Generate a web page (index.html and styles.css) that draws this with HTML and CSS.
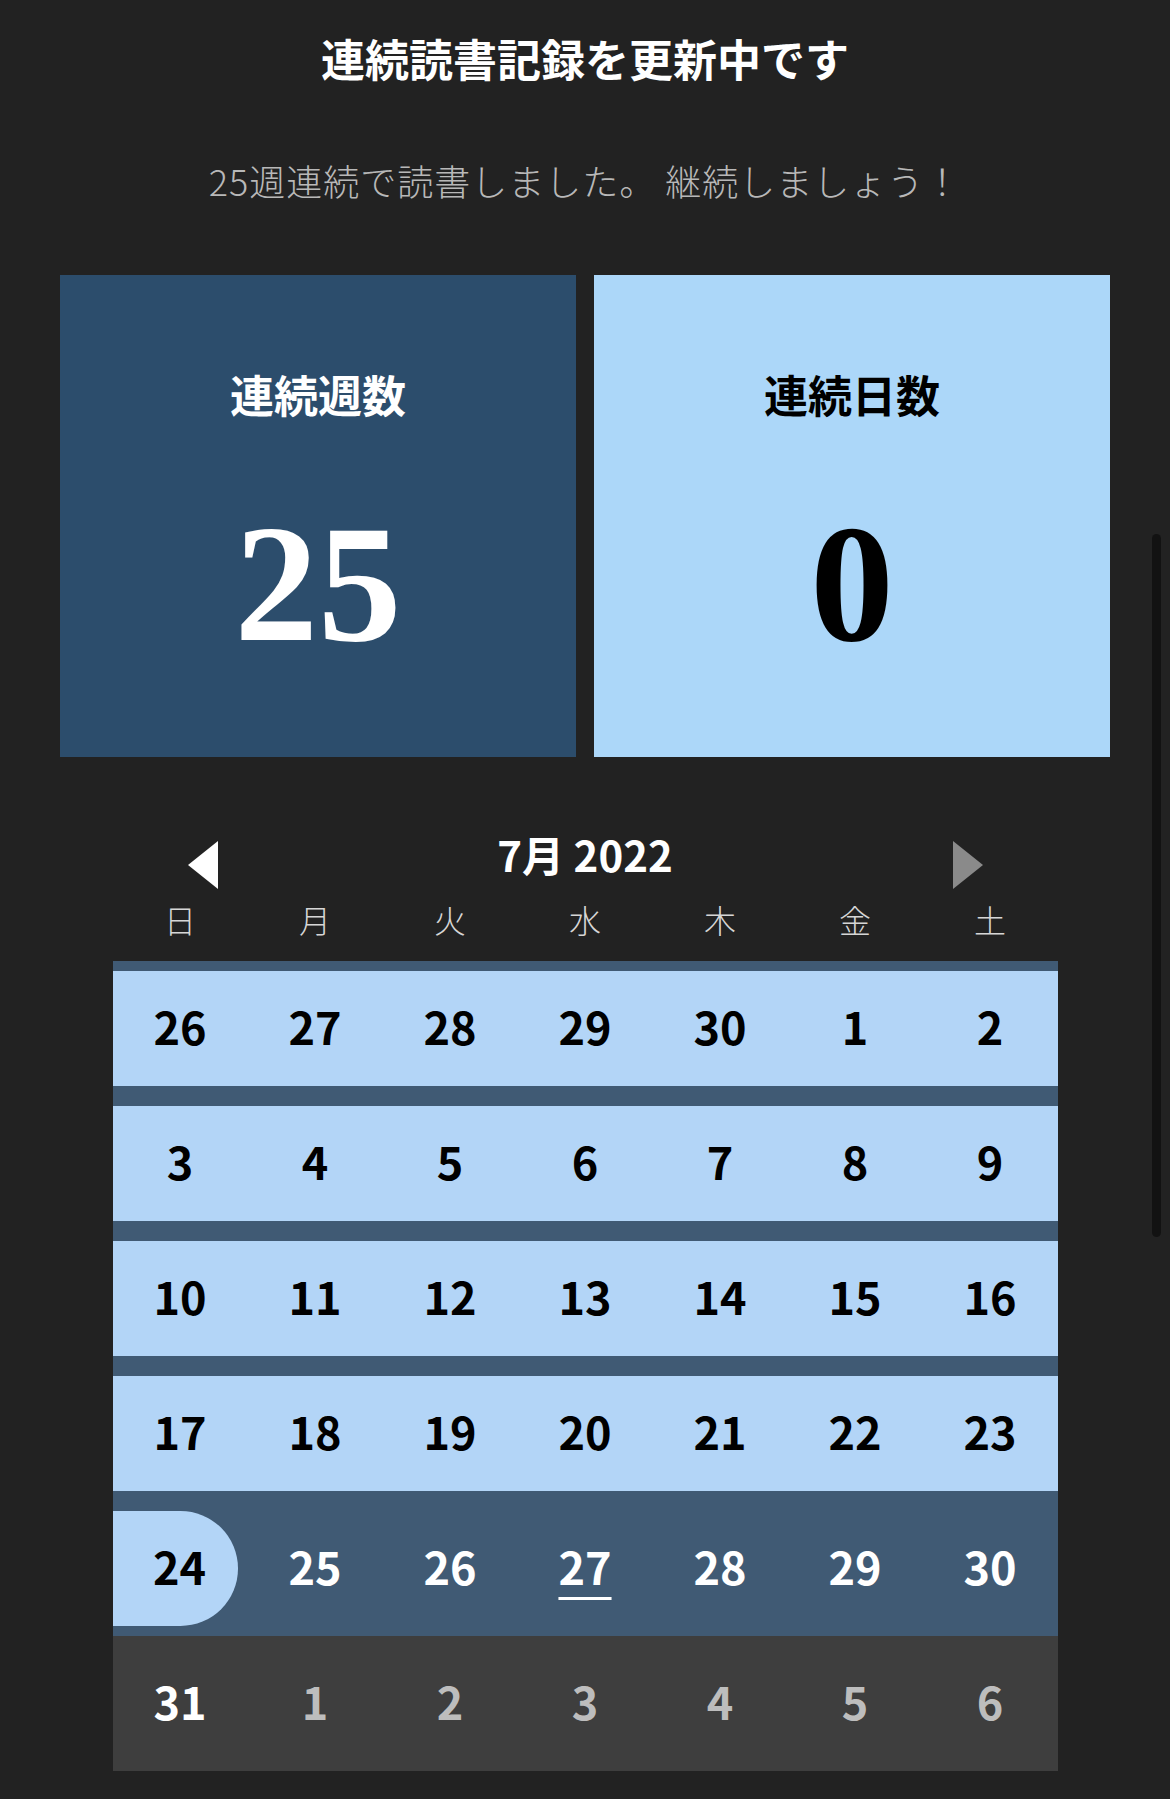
FILE: index.html
```html
<!DOCTYPE html>
<html lang="ja">
<head>
<meta charset="utf-8">
<title>連続読書記録</title>
<link rel="stylesheet" href="styles.css">
</head>
<body>
<div class="page">
  <h1 class="title">連続読書記録を更新中です</h1>
  <p class="subtitle">25週連続で読書しました。 継続しましょう！</p>

  <div class="cards">
    <div class="card card-weeks">
      <div class="card-label">連続週数</div>
      <div class="card-value">25</div>
    </div>
    <div class="card card-days">
      <div class="card-label">連続日数</div>
      <div class="card-value">0</div>
    </div>
  </div>

  <div class="calendar">
    <div class="cal-head">
      <svg class="arrow arrow-prev" width="30" height="48" viewBox="0 0 30 48"><polygon points="30,0 30,48 0,24"/></svg>
      <div class="month">7月 2022</div>
      <svg class="arrow arrow-next" width="30" height="48" viewBox="0 0 30 48"><polygon points="0,0 0,48 30,24"/></svg>
    </div>
    <div class="weekdays">
      <span>日</span><span>月</span><span>火</span><span>水</span><span>木</span><span>金</span><span>土</span>
    </div>
    <div class="weeks">
      <div class="week">
        <div class="band streak"><span>26</span><span>27</span><span>28</span><span>29</span><span>30</span><span>1</span><span>2</span></div>
      </div>
      <div class="week">
        <div class="band streak"><span>3</span><span>4</span><span>5</span><span>6</span><span>7</span><span>8</span><span>9</span></div>
      </div>
      <div class="week">
        <div class="band streak"><span>10</span><span>11</span><span>12</span><span>13</span><span>14</span><span>15</span><span>16</span></div>
      </div>
      <div class="week">
        <div class="band streak"><span>17</span><span>18</span><span>19</span><span>20</span><span>21</span><span>22</span><span>23</span></div>
      </div>
      <div class="week">
        <div class="band current"><span class="day-pill"><span class="pill">24</span></span><span>25</span><span>26</span><span><span class="today">27</span></span><span>28</span><span>29</span><span>30</span></div>
      </div>
      <div class="week week-next">
        <div class="band"><span class="day-in">31</span><span>1</span><span>2</span><span>3</span><span>4</span><span>5</span><span>6</span></div>
      </div>
    </div>
  </div>
</div>
<div class="scrollbar"></div>
</body>
</html>
```

FILE: styles.css
```css
html, body {
  margin: 0;
  padding: 0;
  background: #222222;
}

body {
  font-family: "Noto Sans CJK JP", "Noto Sans", sans-serif;
  color: #ffffff;
  width: 1170px;
  height: 1799px;
  overflow: hidden;
}

.page {
  padding-top: 28px;
  display: flex;
  flex-direction: column;
  align-items: center;
}

.title {
  margin: 0;
  font-size: 44px;
  line-height: 60px;
  font-weight: 700;
  color: #ffffff;
}

.subtitle {
  margin: 67px 0 0;
  font-size: 36px;
  line-height: 50px;
  font-weight: 300;
  letter-spacing: 1px;
  color: #b8b8b8;
}

.cards {
  margin-top: 70px;
  width: 1050px;
  display: grid;
  grid-template-columns: 1fr 1fr;
  gap: 18px;
}

.card {
  height: 482px;
  display: flex;
  flex-direction: column;
  align-items: center;
  padding-top: 89px;
  box-sizing: border-box;
}

.card-weeks {
  background: #2c4d6c;
  color: #ffffff;
}

.card-days {
  background: #acd7f9;
  color: #000000;
}

.card-label {
  font-size: 44px;
  line-height: 60px;
  font-weight: 700;
}

.card-value {
  margin-top: 76px;
  font-family: "Liberation Serif", "Times New Roman", serif;
  font-weight: 700;
  font-size: 167px;
  line-height: 167px;
}

.calendar {
  margin-top: 84px;
  width: 945px;
}

.cal-head {
  display: flex;
  justify-content: space-between;
  align-items: flex-start;
  padding: 0 75px;
  height: 48px;
}

.arrow-prev { fill: #ffffff; }
.arrow-next { fill: #8a8a8a; }

.month {
  margin-top: -7px;
  font-size: 42px;
  line-height: 40px;
  font-weight: 700;
  color: #ffffff;
}

.weekdays {
  display: grid;
  grid-template-columns: repeat(7, 1fr);
  height: 72px;
  box-sizing: border-box;
  padding-top: 10px;
  align-items: start;
}

.weekdays span {
  text-align: center;
  font-size: 32px;
  line-height: 40px;
  font-weight: 300;
  color: #d6d6d6;
}

.weeks {
  display: flex;
  flex-direction: column;
}

.week {
  background: #405a74;
  padding: 10px 0;
}

.band {
  height: 115px;
  display: grid;
  grid-template-columns: repeat(7, 1fr);
  align-items: start;
}

.band > span {
  text-align: center;
  font-size: 45px;
  line-height: 110px;
  font-weight: 700;
}

.band.streak {
  background: #b3d5f7;
  color: #000000;
}

.band.current {
  color: #ffffff;
}

.day-pill {
  display: flex;
  height: 115px;
}

.pill {
  width: 125px;
  height: 115px;
  box-sizing: border-box;
  padding-left: 9px;
  padding-bottom: 5px;
  background: #b3d5f7;
  color: #000000;
  border-radius: 0 58px 58px 0;
  display: flex;
  align-items: center;
  justify-content: center;
}

.today {
  text-decoration: underline;
  text-decoration-thickness: 3px;
  text-underline-offset: 12px;
}

.week-next {
  background: #3e3e3e;
  padding: 10px 0;
}

.week-next .band > span {
  color: #bdbdbd;
}

.week-next .band > span.day-in {
  color: #ffffff;
}

.scrollbar {
  position: fixed;
  top: 534px;
  right: 9px;
  width: 9px;
  height: 703px;
  border-radius: 5px;
  background: #121212;
}
```
